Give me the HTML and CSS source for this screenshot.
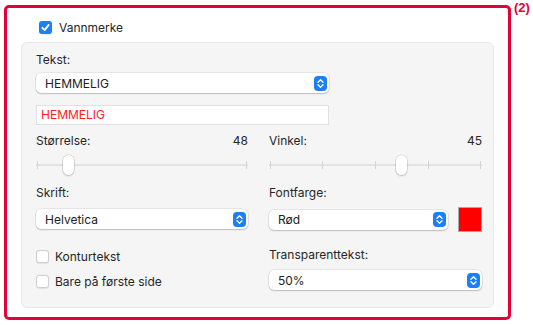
FILE: index.html
```html
<!DOCTYPE html>
<html lang="no">
<head>
    <meta charset="UTF-8">
    <meta name="viewport" content="width=device-width, initial-scale=1.0">
    <title>Vannmerke</title>
    <link rel="stylesheet" href="styles.css">
</head>
<body>
    <div class="frame">
        <label class="check-row top">
            <span class="box checked">
                <svg width="13" height="13" viewBox="0 0 13 13"><path d="M3.4 6.8 L5.6 9.1 L9.7 3.9" fill="none" stroke="#fff" stroke-width="1.8" stroke-linecap="round" stroke-linejoin="round"/></svg>
            </span>
            Vannmerke
        </label>

        <div class="panel">
            <div class="label">Tekst:</div>
            <div class="select wide">
                <span class="value">HEMMELIG</span>
                <span class="stepper">
                    <svg width="13" height="15" viewBox="0 0 13 15"><path d="M4 6.3 L6.5 3.8 L9 6.3 M4 8.7 L6.5 11.2 L9 8.7" fill="none" stroke="#fff" stroke-width="1.4" stroke-linecap="round" stroke-linejoin="round"/></svg>
                </span>
            </div>
            <div class="text-input wide">HEMMELIG</div>

            <div class="grid">
                <div class="field">
                    <div class="label split"><span>Størrelse:</span><span>48</span></div>
                    <div class="slider">
                        <div class="track"></div>
                        <span class="tick" style="left: 0%"></span>
                        <span class="tick" style="left: 100%"></span>
                        <span class="thumb" style="left: 15%"></span>
                    </div>
                </div>
                <div class="field">
                    <div class="label split"><span>Vinkel:</span><span>45</span></div>
                    <div class="slider">
                        <div class="track"></div>
                        <span class="tick" style="left: 0%"></span>
                        <span class="tick" style="left: 25%"></span>
                        <span class="tick" style="left: 50%"></span>
                        <span class="tick" style="left: 75%"></span>
                        <span class="tick" style="left: 100%"></span>
                        <span class="thumb" style="left: 62%"></span>
                    </div>
                </div>

                <div class="field gap-top">
                    <div class="label">Skrift:</div>
                    <div class="select low">
                        <span class="value">Helvetica</span>
                        <span class="stepper">
                            <svg width="13" height="15" viewBox="0 0 13 15"><path d="M4 6.3 L6.5 3.8 L9 6.3 M4 8.7 L6.5 11.2 L9 8.7" fill="none" stroke="#fff" stroke-width="1.4" stroke-linecap="round" stroke-linejoin="round"/></svg>
                        </span>
                    </div>
                </div>
                <div class="field gap-top">
                    <div class="label">Fontfarge:</div>
                    <div class="color-row">
                        <div class="select">
                            <span class="value">Rød</span>
                            <span class="stepper">
                                <svg width="13" height="15" viewBox="0 0 13 15"><path d="M4 6.3 L6.5 3.8 L9 6.3 M4 8.7 L6.5 11.2 L9 8.7" fill="none" stroke="#fff" stroke-width="1.4" stroke-linecap="round" stroke-linejoin="round"/></svg>
                            </span>
                        </div>
                        <span class="swatch"></span>
                    </div>
                </div>

                <div class="field checks boxes">
                    <label class="check-row"><span class="box"></span>Konturtekst</label>
                    <label class="check-row"><span class="box"></span>Bare på første side</label>
                </div>
                <div class="field checks">
                    <div class="label">Transparenttekst:</div>
                    <div class="select">
                        <span class="value">50%</span>
                        <span class="stepper">
                            <svg width="13" height="15" viewBox="0 0 13 15"><path d="M4 6.3 L6.5 3.8 L9 6.3 M4 8.7 L6.5 11.2 L9 8.7" fill="none" stroke="#fff" stroke-width="1.4" stroke-linecap="round" stroke-linejoin="round"/></svg>
                        </span>
                    </div>
                </div>
            </div>
        </div>
    </div>
    <div class="tag">(2)</div>
</body>
</html>
```

FILE: styles.css
```css
body {
    margin: 0;
    font-family: Inter, "Liberation Sans", sans-serif;
    font-size: 12px;
    color: #262626;
    background-color: #ffffff;
    display: flex;
    align-items: flex-start;
}
.frame {
    margin: 5px 0 0 4px;
    width: 507px;
    height: 315px;
    box-sizing: border-box;
    border: 3px solid #e3003b;
    border-radius: 5px;
    padding: 13px 14px 0 14px;
}
.tag {
    margin: 0 0 0 3px;
    font-family: "Liberation Sans", Arial, sans-serif;
    font-weight: bold;
    font-size: 13px;
    line-height: 15px;
    color: #e3003b;
}
.check-row {
    display: flex;
    align-items: center;
    gap: 6px;
    height: 16px;
}
.check-row.top {
    margin-left: 18px;
    gap: 7px;
    height: 13px;
    margin-bottom: 8px;
}
.box {
    width: 13px;
    height: 13px;
    box-sizing: border-box;
    border: 1px solid #cfcfcf;
    border-radius: 3px;
    background-color: #ffffff;
    box-shadow: 0 0.5px 1px rgba(0, 0, 0, 0.08);
    flex: none;
    display: flex;
}
.box.checked {
    border: none;
    background-color: #1b7ff8;
}
.panel {
    height: 266px;
    box-sizing: border-box;
    background-color: #f5f5f5;
    border: 1px solid #e8e8e8;
    border-radius: 6px;
    padding: 9px 11px 0 14px;
}
.label {
    height: 16px;
    line-height: 16px;
}
.label.split {
    display: flex;
    justify-content: space-between;
}
.select {
    height: 20px;
    margin-top: 5px;
    background-color: #ffffff;
    border-radius: 5px;
    box-shadow: 0 0 0 0.5px rgba(0, 0, 0, 0.12), 0 1px 1.5px rgba(0, 0, 0, 0.18);
    display: flex;
    align-items: center;
    padding: 0 2px 0 9px;
    color: #222;
}
.select.low {
    margin-top: 8px;
}
.select .value {
    flex: 1;
}
.wide {
    width: 293px;
    box-sizing: border-box;
}
.stepper {
    width: 13px;
    height: 15px;
    border-radius: 4px;
    background-color: #1b7ff8;
    display: flex;
}
.text-input {
    height: 20px;
    margin-top: 12px;
    background-color: #ffffff;
    border: 1px solid #e0e0e0;
    padding: 0 4px;
    line-height: 18px;
    color: #ff1a1a;
}
.grid {
    display: grid;
    grid-template-columns: 212px 213px;
    column-gap: 21px;
    margin-top: 8px;
}
.slider {
    position: relative;
    height: 20px;
    margin-top: 6px;
}
.track {
    position: absolute;
    left: 0;
    right: 0;
    top: 9px;
    height: 2px;
    background-color: #e2e2e2;
}
.tick {
    position: absolute;
    top: 6px;
    width: 1px;
    height: 8px;
    margin-left: -0.5px;
    background-color: #d4d4d4;
}
.tick:first-of-type {
    margin-left: 1px;
}
.tick[style="left: 100%"] {
    margin-left: -2px;
}
.thumb {
    position: absolute;
    top: 0;
    width: 11px;
    height: 20px;
    margin-left: -5px;
    background-color: #ffffff;
    border-radius: 6px;
    box-shadow: 0 0 0 0.5px rgba(0, 0, 0, 0.15), 0 1px 2px rgba(0, 0, 0, 0.2);
}
.gap-top {
    margin-top: 10px;
}
.color-row {
    display: flex;
    align-items: center;
    margin-top: 6px;
}
.color-row .select {
    width: 180px;
    box-sizing: border-box;
    margin-top: 0;
}
.swatch {
    width: 24px;
    height: 25px;
    margin-left: 10px;
    box-sizing: border-box;
    border: 1px solid #a8a8a8;
    background-color: #ff0000;
}
.checks {
    margin-top: 15px;
    display: flex;
    flex-direction: column;
}
.checks.boxes {
    padding-top: 1px;
}
.checks .check-row + .check-row {
    margin-top: 9px;
}
.checks .select {
    margin-top: 7px;
}
```
